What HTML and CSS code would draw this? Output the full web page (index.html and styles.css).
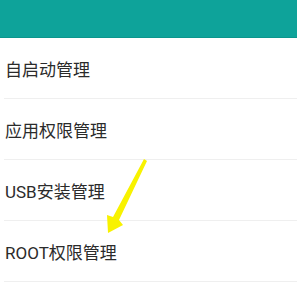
FILE: index.html
```html
<!DOCTYPE html>
<html lang="zh-CN">
<head>
    <meta charset="UTF-8">
    <meta name="viewport" content="width=device-width, initial-scale=1.0">
    <title>权限管理</title>
    <link rel="stylesheet" href="styles.css">
</head>
<body>
    <div class="header"></div>
    <ul class="menu">
        <li>自启动管理</li>
        <li>应用权限管理</li>
        <li>USB安装管理</li>
        <li>ROOT权限管理</li>
    </ul>
    <!-- 노란 화살표 -->
    <svg class="arrow" width="297" height="287" viewBox="0 0 297 287">
        <polygon points="144,159 147,161 119,220 123,225 108,233 107,215 113,217" fill="#f8f200"/>
    </svg>
</body>
</html>
```

FILE: styles.css
```css
body {
    margin: 0;
    background-color: #fff;
    font-family: Roboto, "Noto Sans CJK SC", sans-serif;
    position: relative;
    height: 287px;
    overflow: hidden;
}
.header {
    height: 37px;
    background-color: #0ea39a;
    border-bottom: 1px solid #0b968d;
}
.menu {
    list-style: none;
    margin: 0;
    padding: 0;
}
.menu li {
    height: 56px;
    line-height: 56px;
    padding-top: 4px;
    margin-left: 4px;
    padding-left: 1px;
    font-size: 17px;
    color: #2b2b2b;
    border-bottom: 1px solid #efefef;
}
.arrow {
    position: absolute;
    top: 0;
    left: 0;
}
```
